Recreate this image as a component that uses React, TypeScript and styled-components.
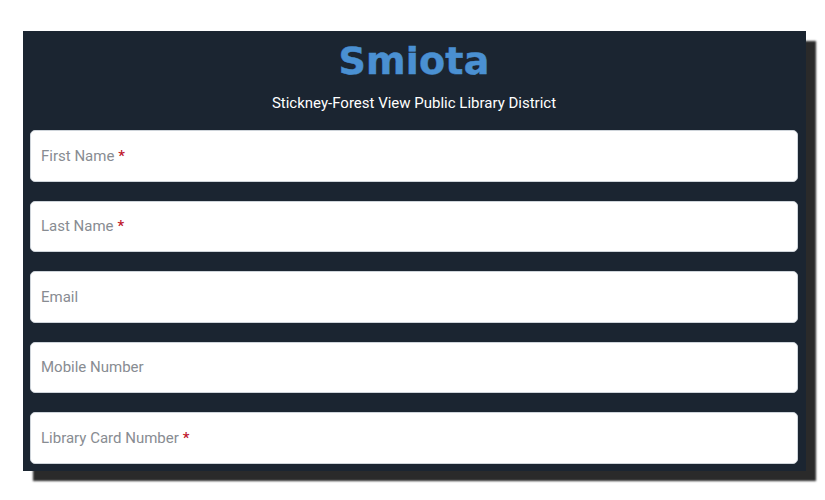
import React from 'react';
import styled, { createGlobalStyle } from 'styled-components';

const GlobalStyle = createGlobalStyle`
  html, body {
    margin: 0;
    padding: 0;
    background: #fff;
    overflow: hidden;
  }
`

const Page = styled.div`
  width: 825px;
  height: 500px;
  padding: 31px 19px 0 23px;
  box-sizing: border-box;
`

const Card = styled.form`
  width: 783px;
  height: 440px;
  box-sizing: border-box;
  padding: 0 8px 0 7px;
  background: #1b2531;
  box-shadow: 10px 10px 2px #2a2a2a;
  font-family: Roboto, "Liberation Sans", sans-serif;
`

const Header = styled.header`
  display: flex;
  flex-direction: column;
  align-items: center;
  height: 99.2px;
`

const Logo = styled.div`
  height: 60px;
  font-family: "DejaVu Sans", "Liberation Sans", sans-serif;
  font-size: 38px;
  font-weight: 700;
  line-height: 60px;
  letter-spacing: 0.2px;
  -webkit-text-stroke: 0.5px #4a90d2;
  color: #4a90d2;
`

const District = styled.div`
  font-size: 15px;
  line-height: 24px;
  color: #fff;
`

const Fields = styled.div`
  display: flex;
  flex-direction: column;
  gap: 18.7px;
`

const Field = styled.label`
  display: flex;
  align-items: center;
  height: 51.8px;
  box-sizing: border-box;
  padding: 0 10px 0.6px;
  background: #fff;
  border: 1px solid #ced4da;
  border-radius: 5px;
  font-size: 15px;
  color: #888c92;
`

const Required = styled.span`
  margin-left: 4px;
  font-weight: 500;
  color: #c0172c;
`

const fields = [
  { label: 'First Name', required: true },
  { label: 'Last Name', required: true },
  { label: 'Email', required: false },
  { label: 'Mobile Number', required: false },
  { label: 'Library Card Number', required: true },
];

export default function App() {
  return <Page>
    <GlobalStyle />
    <Card>
      <Header>
        <Logo>Smiota</Logo>
        <District>Stickney-Forest View Public Library District</District>
      </Header>
      <Fields>
        {fields.map((f) => <Field key={f.label}>
          {f.label}{f.required && <Required>*</Required>}
        </Field>)}
      </Fields>
    </Card>
  </Page>
}
